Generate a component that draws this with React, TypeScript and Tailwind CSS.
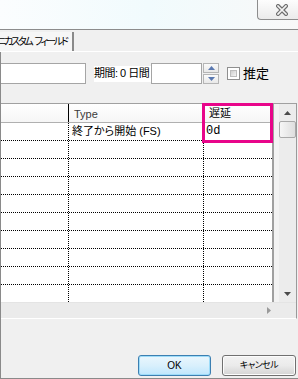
import React from 'react';

const rows = Array.from({ length: 10 });

function CloseGlyph() {
  return (
    <svg width="12" height="12" viewBox="0 0 12 12">
      <path d="M2 2 L10 10 M10 2 L2 10" stroke="#6f6f6f" strokeWidth="4" strokeLinecap="square" />
      <path d="M2 2 L10 10 M10 2 L2 10" stroke="#f4f4f4" strokeWidth="1.6" strokeLinecap="square" />
    </svg>
  );
}

function Arrow({ dir, color = '#4a4a4a' }: { dir: 'up' | 'down' | 'right'; color?: string }) {
  const d = dir === 'up' ? 'M0 4 L3.5 0 L7 4 Z' : dir === 'down' ? 'M0 0 L7 0 L3.5 4 Z' : 'M0 0 L4 3.5 L0 7 Z';
  const w = dir === 'right' ? 4 : 7;
  const h = dir === 'right' ? 7 : 4;
  return (
    <svg width={w} height={h} viewBox={`0 0 ${w} ${h}`}>
      <path d={d} fill={color} />
    </svg>
  );
}

export default function App() {
  return (
    <div className="w-[298px] h-[379px] bg-[#f0f0f0] flex flex-col overflow-hidden text-black font-['Liberation_Sans','Noto_Sans_CJK_JP',sans-serif] [font-feature-settings:'palt']">
      {/* title bar */}
      <div className="h-[30px] shrink-0 flex justify-end items-start border-b border-[#8c8c8c] bg-gradient-to-r from-[#fbfdfe] via-[#f1fbfd] to-[#f8f8f8]">
        <div className="w-[41px] h-[20px] border-l border-b border-[#8d8d8d] rounded-bl-[4px] bg-gradient-to-b from-[#fdfdfd] to-[#ebebeb] flex items-center pl-[18px]">
          <CloseGlyph />
        </div>
      </div>

      {/* tab strip */}
      <div className="h-[22px] shrink-0 flex items-end border-b border-white">
        <div className="h-[19px] w-[74px] overflow-hidden whitespace-nowrap border-r-2 border-r-[#8a8a8a] bg-[#f6f6f6]">
          <div className="ml-[-3px] flex gap-[3px] text-[10px] leading-[19px] tracking-[-2.2px]">
            <span>ニカスタム</span>
            <span>フィールド</span>
          </div>
        </div>
      </div>

      {/* body */}
      <div className="flex-1 flex flex-col border-l border-b border-[#8a8a8a]">
        {/* controls */}
        <div className="mt-[11px] h-[21px] flex items-center">
          <div className="w-[85px] h-[21px] bg-white border border-l-0 border-[#a5a5a5]" />
          <div className="ml-[8px] w-[57px] h-[16px] bg-white flex items-center text-[11px] leading-none whitespace-nowrap tracking-[-0.5px]">
            期間: 0 日間
          </div>
          <div className="w-[51px] h-[21px] bg-white border border-[#a5a5a5]" />
          <div className="ml-[1px] w-[16px] h-[21px] flex flex-col gap-[1px]">
            <div className="flex-1 border border-[#b5b5b5] bg-gradient-to-b from-[#fbfbfb] to-[#e8e8e8] flex items-center justify-center">
              <Arrow dir="up" color="#5a78b0" />
            </div>
            <div className="flex-1 border border-[#b5b5b5] bg-gradient-to-b from-[#fbfbfb] to-[#e8e8e8] flex items-center justify-center">
              <Arrow dir="down" color="#5a78b0" />
            </div>
          </div>
          <div className="ml-[8px] w-[13px] h-[13px] border border-[#8f8f8f] bg-white p-[2px]">
            <div className="w-full h-full bg-gradient-to-br from-[#cfcfcf] to-[#f4f4f4] border border-[#bdbdbd]" />
          </div>
          <div className="ml-[3px] text-[13px] leading-none">推定</div>
        </div>

        {/* grid */}
        <div className="relative mt-[19px] mr-[1px] h-[216px] flex flex-col border-t border-r border-b border-t-[#a0a0a0] border-r-[#9a9a9a] border-b-white">
          <div className="flex-1 flex min-h-0">
            <div className="w-[273px] border-r-2 border-[#a0a0a0] bg-white overflow-hidden flex flex-col">
              <div className="h-[19px] shrink-0 grid grid-cols-[68px_135px_68px] border-b border-[#b0b0b0] bg-gradient-to-b from-white to-[#f6f6f6]">
                <div className="border-r border-black" />
                <div className="border-r border-black text-[11px] text-[#3a3a3a] pl-[5px] pt-[4px] leading-[12px]">Type</div>
                <div className="text-[11px] pl-[5px] pt-[3px] leading-[12px]">遅延</div>
              </div>
              {rows.map((_, i) => (
                <div key={i} className="h-[18px] shrink-0 grid grid-cols-[68px_135px_68px] border-b border-dotted border-black">
                  <div className="border-r border-dotted border-black" />
                  <div className="border-r border-dotted border-black text-[11px] leading-[17px] pl-[3px] whitespace-nowrap">
                    {i === 0 ? '終了から開始 (FS)' : ''}
                  </div>
                  <div className="text-[12px] leading-[17px] pl-[2px] font-['Liberation_Mono',monospace]">
                    {i === 0 ? '0d' : ''}
                  </div>
                </div>
              ))}
            </div>
            <div className="w-[5px] bg-[#f3f3f3]" />
            <div className="w-[17px] bg-[#ececec] flex flex-col">
              <div className="h-[17px] flex items-center justify-center">
                <Arrow dir="up" />
              </div>
              <div className="h-[17px] rounded-[2px] border border-[#a9a9a9] bg-gradient-to-r from-[#f6f6f6] to-[#dedede]" />
              <div className="flex-1" />
              <div className="h-[17px] flex items-center justify-center">
                <Arrow dir="down" />
              </div>
            </div>
          </div>
          <div className="h-[16px] shrink-0 bg-[#ebebeb] border-t border-[#e4e4e4] flex items-center pl-[266px]">
            <Arrow dir="right" color="#9a9a9a" />
          </div>

          {/* highlight box */}
          <div className="absolute left-[201px] top-[-1px] w-[71px] h-[40px] border-[3px] border-[#e8058a]" />
        </div>

        {/* buttons */}
        <div className="mt-[36px] flex justify-end gap-[11px] pr-[2px]">
          <div className="w-[73px] h-[21px] rounded-[3px] border border-[#3c7fb1] shadow-[inset_0_0_0_1px_#9ddcf9] bg-gradient-to-b from-[#eaf6fd] via-[#d9f0fc] to-[#bee6fd] flex items-center justify-center text-[10px]">
            OK
          </div>
          <div className="w-[74px] h-[21px] rounded-[3px] border border-[#707070] shadow-[inset_0_0_0_1px_#fcfcfc] bg-gradient-to-b from-[#f2f2f2] via-[#ebebeb] to-[#d4d4d4] flex items-center justify-center text-[9px] tracking-[-0.5px]">
            キャンセル
          </div>
        </div>
      </div>
    </div>
  );
}
